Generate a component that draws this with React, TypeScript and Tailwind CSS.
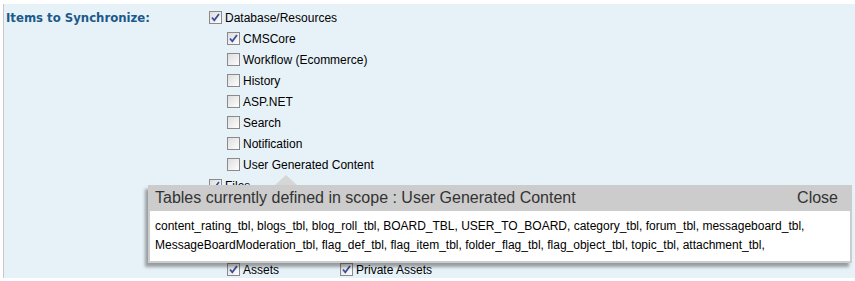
import React from 'react';

type Item = { label: string; checked: boolean };

const dbItems: Item[] = [
  { label: 'CMSCore', checked: true },
  { label: 'Workflow (Ecommerce)', checked: false },
  { label: 'History', checked: false },
  { label: 'ASP.NET', checked: false },
  { label: 'Search', checked: false },
  { label: 'Notification', checked: false },
  { label: 'User Generated Content', checked: false },
];

const tables = [
  'content_rating_tbl, blogs_tbl, blog_roll_tbl, BOARD_TBL, USER_TO_BOARD, category_tbl, forum_tbl, messageboard_tbl,',
  'MessageBoardModeration_tbl, flag_def_tbl, flag_item_tbl, folder_flag_tbl, flag_object_tbl, topic_tbl, attachment_tbl,',
];

function Box({ checked }: { checked: boolean }) {
  return (
    <svg width="13" height="13" viewBox="0 0 13 13" className="shrink-0">
      <defs>
        <linearGradient id="cbg" x1="0" y1="0" x2="1" y2="1">
          <stop offset="0" stopColor="#dcdcdc" />
          <stop offset="1" stopColor="#ffffff" />
        </linearGradient>
      </defs>
      <rect x="0.5" y="0.5" width="12" height="12" fill="url(#cbg)" stroke="#8a8a8a" />
      {checked && (
        <path d="M3 6.5 L5.3 9.3 L10 3" fill="none" stroke="#3b4f9a" strokeWidth="1.8" />
      )}
    </svg>
  );
}

function Row({ label, checked }: Item) {
  return (
    <div className="flex h-[21px] items-center gap-[3px]">
      <Box checked={checked} />
      <span>{label}</span>
    </div>
  );
}

function App() {
  return (
    <div className="h-[281px] w-[855px] overflow-hidden bg-white pt-[4px]">
      <div className="relative ml-[3px] flex h-[274px] border-l border-[#c8c8c8] bg-[#e7f2f8] font-['Liberation_Sans',Arial,sans-serif] text-[12px] text-black">
        {/* Label */}
        <div className="w-[205px] pl-[2px] pt-[4px]">
          <span className="font-['DejaVu_Sans_Condensed','DejaVu_Sans',sans-serif] text-[13px] font-bold text-[#1b5a8a]">
            Items to Synchronize:
          </span>
        </div>

        {/* Checkbox tree */}
        <div className="pt-[3px]">
          <Row label="Database/Resources" checked />
          <div className="pl-[18px]">
            {dbItems.map((it) => (
              <Row key={it.label} {...it} />
            ))}
          </div>
          <Row label="Files" checked />
          <div className="pl-[18px]">
            <div className="h-[63px]" />
            <div className="flex">
              <div className="w-[113px]">
                <Row label="Assets" checked />
              </div>
              <Row label="Private Assets" checked />
            </div>
          </div>
        </div>

        {/* Scope popup */}
        <div className="absolute left-[144px] top-[181px] w-[704px]">
          <div className="absolute left-[127px] top-[-10px] h-0 w-0 border-x-[11px] border-b-[10px] border-x-transparent border-b-[#d6d6d6]" />
          <div className="border-2 border-t-0 border-[#cccccc] bg-white shadow-[-3px_4px_3px_rgba(0,0,0,0.35)]">
            <div className="flex h-[26px] items-center justify-between bg-[#cccccc] pl-[5px] pr-[12px] text-[16px] text-[#333333]">
              <span>Tables currently defined in scope : User Generated Content</span>
              <span>Close</span>
            </div>
            <div className="px-[5px] pb-[6px] pt-[6px] leading-[19px]">
              {tables.map((t) => (
                <div key={t}>{t}</div>
              ))}
            </div>
          </div>
        </div>
      </div>
    </div>
  );
}

export default App;
